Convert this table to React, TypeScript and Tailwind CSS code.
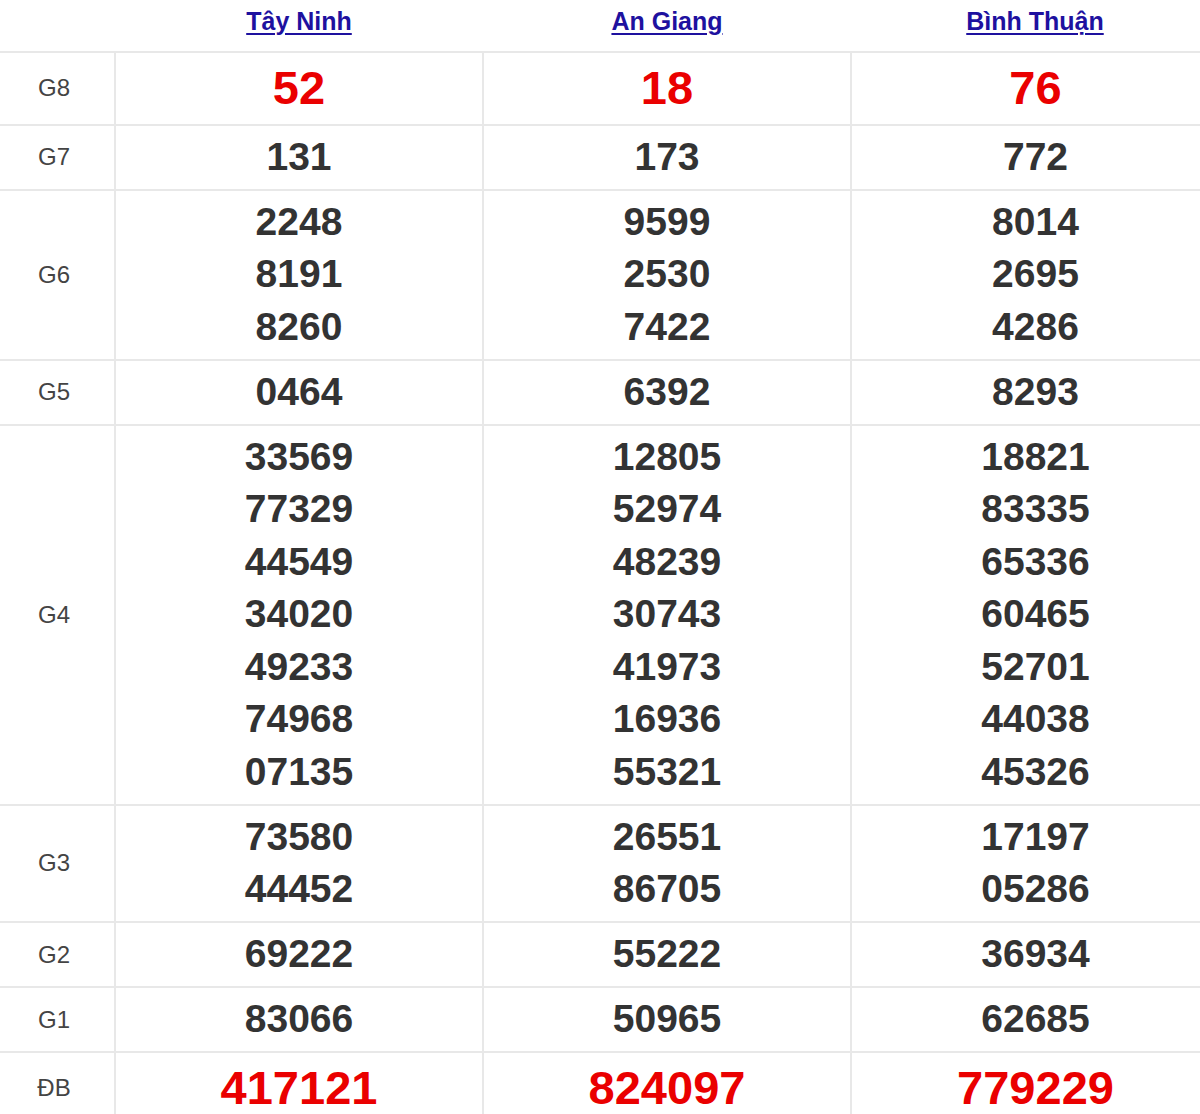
// Kết quả xổ số miền Nam: ba đài, mỗi giải một hàng.

type Prize = { label: string; rows: [string[], string[], string[]]; red?: boolean };

const provinces = ["Tây Ninh", "An Giang", "Bình Thuận"];

const prizes: Prize[] = [
  { label: "G8", rows: [["52"], ["18"], ["76"]], red: true },
  { label: "G7", rows: [["131"], ["173"], ["772"]] },
  {
    label: "G6",
    rows: [
      ["2248", "8191", "8260"],
      ["9599", "2530", "7422"],
      ["8014", "2695", "4286"],
    ],
  },
  { label: "G5", rows: [["0464"], ["6392"], ["8293"]] },
  {
    label: "G4",
    rows: [
      ["33569", "77329", "44549", "34020", "49233", "74968", "07135"],
      ["12805", "52974", "48239", "30743", "41973", "16936", "55321"],
      ["18821", "83335", "65336", "60465", "52701", "44038", "45326"],
    ],
  },
  {
    label: "G3",
    rows: [
      ["73580", "44452"],
      ["26551", "86705"],
      ["17197", "05286"],
    ],
  },
  { label: "G2", rows: [["69222"], ["55222"], ["36934"]] },
  { label: "G1", rows: [["83066"], ["50965"], ["62685"]] },
  { label: "ĐB", rows: [["417121"], ["824097"], ["779229"]], red: true },
];

export default function App() {
  // the table is a bit wider than the window; its right edge is cut off
  return (
    <div className="w-[1200px] overflow-hidden bg-white font-['Liberation_Sans',Arial,sans-serif]">
      <table className="w-[1219px] border-collapse table-fixed">
        <colgroup>
          <col className="w-[115px]" />
          <col />
          <col />
          <col />
        </colgroup>
        <thead>
          <tr className="h-[52px]">
            <th />
            {provinces.map((p) => (
              <th key={p} className="pb-[8px] text-center align-middle">
                <a href="#" className="text-[25px] font-bold text-[#1e119f] underline underline-offset-[3px] decoration-[2px]">
                  {p}
                </a>
              </th>
            ))}
          </tr>
        </thead>
        <tbody>
          {prizes.map((prize) => (
            <tr key={prize.label} className="border-t-2 border-[#e8e8e8]">
              <td className="pr-[6px] text-center align-middle text-[24px] text-[#444]">{prize.label}</td>
              {prize.rows.map((nums, i) => (
                <td key={i} className="border-l-2 border-[#e8e8e8] py-[5.25px] text-center align-middle">
                  {nums.map((n) => (
                    <div
                      key={n}
                      className={
                        prize.red
                          ? "text-[47px] leading-[60px] font-bold text-[#ea0000]"
                          : "text-[39px] leading-[52.5px] font-bold text-[#333]"
                      }
                    >
                      {n}
                    </div>
                  ))}
                </td>
              ))}
            </tr>
          ))}
        </tbody>
      </table>
    </div>
  );
}
